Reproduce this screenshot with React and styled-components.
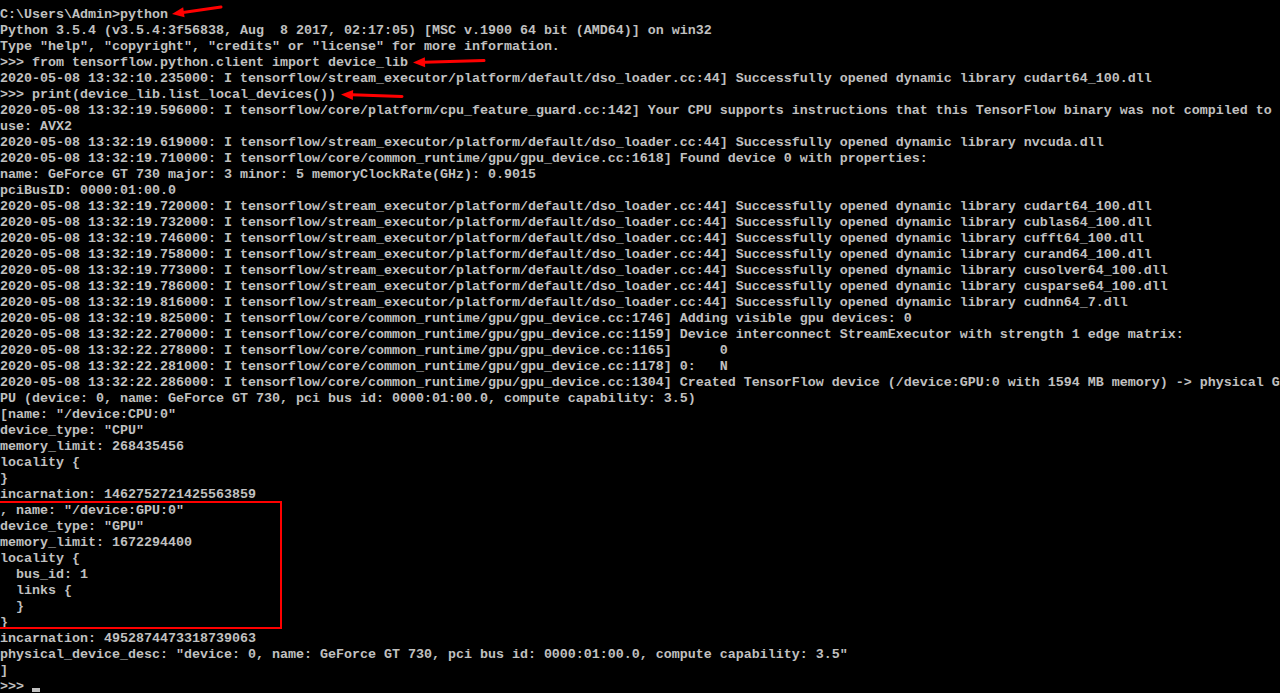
import React from 'react';
import styled, { createGlobalStyle } from 'styled-components';

const Global = createGlobalStyle`
    html, body {
        margin: 0;
        padding: 0;
        background: #000;
    }
`

const Console = styled.div`
    position: relative;
    width: 1280px;
    height: 693px;
    overflow: hidden;
    box-sizing: border-box;
    padding-top: 7px;
    background: #000;
    color: #c0c0c0;
    font-family: "Liberation Mono", "DejaVu Sans Mono", monospace;
    font-size: 13.3333px;
    font-weight: bold;
`

const Line = styled.div`
    height: 16px;
    line-height: 16px;
    white-space: pre;
`

const Cursor = styled.span`
    display: inline-block;
    width: 8px;
    height: 4px;
    background: #c0c0c0;
    vertical-align: -2px;
`

const Highlight = styled.div`
    position: absolute;
    left: -2px;
    top: 501px;
    width: 284px;
    height: 128px;
    box-sizing: border-box;
    border: 2px solid #ff0000;
`

const Overlay = styled.svg`
    position: absolute;
    left: 0;
    top: 0;
    pointer-events: none;
`

const dso = (t, lib) =>
    `2020-05-08 13:32:${t}: I tensorflow/stream_executor/platform/default/dso_loader.cc:44] Successfully opened dynamic library ${lib}`
const gpu = (t, n, msg) =>
    `2020-05-08 13:32:${t}: I tensorflow/core/common_runtime/gpu/gpu_device.cc:${n}] ${msg}`

const lines = [
    'C:\\Users\\Admin>python',
    'Python 3.5.4 (v3.5.4:3f56838, Aug  8 2017, 02:17:05) [MSC v.1900 64 bit (AMD64)] on win32',
    'Type "help", "copyright", "credits" or "license" for more information.',
    '>>> from tensorflow.python.client import device_lib',
    dso('10.235000', 'cudart64_100.dll'),
    '>>> print(device_lib.list_local_devices())',
    '2020-05-08 13:32:19.596000: I tensorflow/core/platform/cpu_feature_guard.cc:142] Your CPU supports instructions that this TensorFlow binary was not compiled to',
    'use: AVX2',
    dso('19.619000', 'nvcuda.dll'),
    gpu('19.710000', 1618, 'Found device 0 with properties:'),
    'name: GeForce GT 730 major: 3 minor: 5 memoryClockRate(GHz): 0.9015',
    'pciBusID: 0000:01:00.0',
    dso('19.720000', 'cudart64_100.dll'),
    dso('19.732000', 'cublas64_100.dll'),
    dso('19.746000', 'cufft64_100.dll'),
    dso('19.758000', 'curand64_100.dll'),
    dso('19.773000', 'cusolver64_100.dll'),
    dso('19.786000', 'cusparse64_100.dll'),
    dso('19.816000', 'cudnn64_7.dll'),
    gpu('19.825000', 1746, 'Adding visible gpu devices: 0'),
    gpu('22.270000', 1159, 'Device interconnect StreamExecutor with strength 1 edge matrix:'),
    gpu('22.278000', 1165, '     0'),
    gpu('22.281000', 1178, '0:   N'),
    gpu('22.286000', 1304, 'Created TensorFlow device (/device:GPU:0 with 1594 MB memory) -> physical G'),
    'PU (device: 0, name: GeForce GT 730, pci bus id: 0000:01:00.0, compute capability: 3.5)',
    '[name: "/device:CPU:0"',
    'device_type: "CPU"',
    'memory_limit: 268435456',
    'locality {',
    '}',
    'incarnation: 1462752721425563859',
    ', name: "/device:GPU:0"',
    'device_type: "GPU"',
    'memory_limit: 1672294400',
    'locality {',
    '  bus_id: 1',
    '  links {',
    '  }',
    '}',
    'incarnation: 4952874473318739063',
    'physical_device_desc: "device: 0, name: GeForce GT 730, pci bus id: 0000:01:00.0, compute capability: 3.5"',
    ']',
]

// tip and tail of each red arrow
const arrows = [
    { tip: [172, 14], tail: [221, 7] },
    { tip: [413, 62.5], tail: [484, 60.5] },
    { tip: [341, 94.5], tail: [402, 96.5] },
]

function Arrow({ tip, tail }) {
    const dx = tail[0] - tip[0]
    const dy = tail[1] - tip[1]
    const len = Math.hypot(dx, dy)
    const ux = dx / len
    const uy = dy / len
    const headLen = 12
    const headW = 5
    const bx = tip[0] + ux * headLen
    const by = tip[1] + uy * headLen
    const head = [
        [tip[0], tip[1]],
        [bx - uy * headW, by + ux * headW],
        [bx + uy * headW, by - ux * headW],
    ].map(p => p.join(',')).join(' ')
    return (
        <g fill="#ff0000" stroke="#ff0000">
            <line x1={bx - ux * 1} y1={by - uy * 1} x2={tail[0]} y2={tail[1]} strokeWidth="3" strokeLinecap="round" />
            <polygon points={head} strokeWidth="0" />
        </g>
    )
}

export default function App() {
    return (
        <Console>
            <Global />
            {lines.map((l, i) => <Line key={i}>{l}</Line>)}
            <Line>{'>>> '}<Cursor /></Line>
            <Highlight />
            <Overlay width="1280" height="693">
                {arrows.map((a, i) => <Arrow key={i} {...a} />)}
            </Overlay>
        </Console>
    );
}
